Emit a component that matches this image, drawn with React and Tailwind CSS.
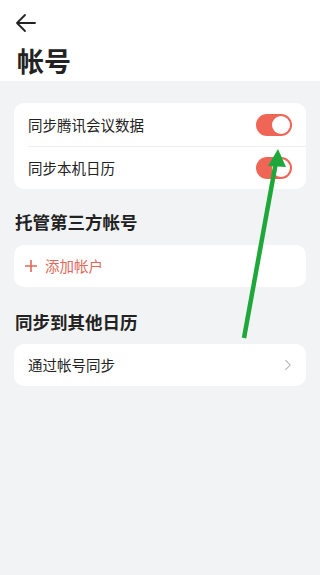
import { ChevronRight } from "lucide-react";

const font = { fontFamily: '"Noto Sans CJK SC", "Noto Sans", sans-serif' };

function Toggle() {
  return (
    <div className="flex h-[22px] w-[36px] items-center justify-end rounded-full bg-[#ef6656] p-[2px]">
      <div className="h-[18px] w-[18px] rounded-full bg-white" />
    </div>
  );
}

export default function App() {
  return (
    <div className="relative h-[575px] w-[320px] overflow-hidden bg-[#f2f3f5] text-[#222]" style={font}>
      <div className="bg-white px-[15px] pt-[12px] pb-[2px]">
        <svg width="22" height="22" viewBox="0 0 22 22" className="text-[#222]">
          <path d="M20 11H2M10 3L2 11l8 8" fill="none" stroke="currentColor" strokeWidth="1.8" strokeLinecap="round" strokeLinejoin="round" />
        </svg>
        <h1 className="mt-[9px] pl-[2px] text-[27px] font-bold leading-[36px]">帐号</h1>
      </div>

      <div className="px-[14px] pt-[22px]">
        <div className="rounded-[10px] bg-white">
          <div className="flex h-[43px] items-center justify-between pl-[14px] pr-[14px]">
            <span className="text-[14.5px]">同步腾讯会议数据</span>
            <Toggle />
          </div>
          <div className="ml-[14px] h-px bg-[#eeeeee]" />
          <div className="flex h-[42px] items-center justify-between pl-[14px] pr-[14px]">
            <span className="text-[14.5px]">同步本机日历</span>
            <Toggle />
          </div>
        </div>

        <h2 className="mt-[20px] pl-[1px] text-[17.5px] font-bold leading-[26px]">托管第三方帐号</h2>
        <div className="mt-[10px] flex h-[42px] items-center rounded-[10px] bg-white pl-[10px] text-[#e1685a]">
          <svg width="14" height="14" viewBox="0 0 14 14">
            <path d="M7 1v12M1 7h12" stroke="currentColor" strokeWidth="1.6" />
          </svg>
          <span className="ml-[7px] text-[14.5px]">添加帐户</span>
        </div>

        <h2 className="mt-[22px] pl-[1px] text-[17.5px] font-bold leading-[26px]">同步到其他日历</h2>
        <div className="mt-[9px] flex h-[42px] items-center justify-between rounded-[10px] bg-white pl-[14px] pr-[9px]">
          <span className="text-[14.5px]">通过帐号同步</span>
          <ChevronRight size={18} strokeWidth={1.4} className="text-[#a8a8a8]" />
        </div>
      </div>

      <svg className="pointer-events-none absolute left-0 top-0" width="320" height="575" viewBox="0 0 320 575">
        <line x1="244" y1="338" x2="276" y2="162" stroke="#1fa83a" strokeWidth="4.5" />
        <polygon points="278,149 286,167 268,166" fill="#1fa83a" />
      </svg>
    </div>
  );
}
